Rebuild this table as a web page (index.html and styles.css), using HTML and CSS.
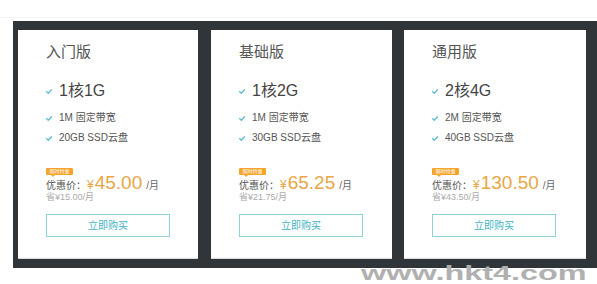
FILE: index.html
```html
<!DOCTYPE html>
<html lang="zh-CN">
<head>
<meta charset="utf-8">
<title>云服务器套餐</title>
<link rel="stylesheet" href="styles.css">
</head>
<body>
<div class="topline"></div>
<div class="frame">
  <div class="card">
    <div class="title">入门版</div>
    <div class="spec"><svg class="chk" viewBox="0 0 6 5"><path d="M0.5 2.6 L2.3 4.2 L5.5 0.8" /></svg>1核1G</div>
    <div class="feat first"><svg class="chk" viewBox="0 0 6 5"><path d="M0.5 2.6 L2.3 4.2 L5.5 0.8" /></svg>1M 固定带宽</div>
    <div class="feat"><svg class="chk" viewBox="0 0 6 5"><path d="M0.5 2.6 L2.3 4.2 L5.5 0.8" /></svg>20GB SSD云盘</div>
    <div class="badge">限时特惠</div>
    <div class="price"><span class="lbl">优惠价：</span><span class="yen">¥</span><span class="num">45.00</span><span class="unit">/月</span></div>
    <div class="save">省¥15.00/月</div>
    <div class="btn">立即购买</div>
  </div>
  <div class="card">
    <div class="title">基础版</div>
    <div class="spec"><svg class="chk" viewBox="0 0 6 5"><path d="M0.5 2.6 L2.3 4.2 L5.5 0.8" /></svg>1核2G</div>
    <div class="feat first"><svg class="chk" viewBox="0 0 6 5"><path d="M0.5 2.6 L2.3 4.2 L5.5 0.8" /></svg>1M 固定带宽</div>
    <div class="feat"><svg class="chk" viewBox="0 0 6 5"><path d="M0.5 2.6 L2.3 4.2 L5.5 0.8" /></svg>30GB SSD云盘</div>
    <div class="badge">限时特惠</div>
    <div class="price"><span class="lbl">优惠价：</span><span class="yen">¥</span><span class="num">65.25</span><span class="unit">/月</span></div>
    <div class="save">省¥21.75/月</div>
    <div class="btn">立即购买</div>
  </div>
  <div class="card">
    <div class="title">通用版</div>
    <div class="spec"><svg class="chk" viewBox="0 0 6 5"><path d="M0.5 2.6 L2.3 4.2 L5.5 0.8" /></svg>2核4G</div>
    <div class="feat first"><svg class="chk" viewBox="0 0 6 5"><path d="M0.5 2.6 L2.3 4.2 L5.5 0.8" /></svg>2M 固定带宽</div>
    <div class="feat"><svg class="chk" viewBox="0 0 6 5"><path d="M0.5 2.6 L2.3 4.2 L5.5 0.8" /></svg>40GB SSD云盘</div>
    <div class="badge">限时特惠</div>
    <div class="price"><span class="lbl">优惠价：</span><span class="yen">¥</span><span class="num">130.50</span><span class="unit">/月</span></div>
    <div class="save">省¥43.50/月</div>
    <div class="btn">立即购买</div>
  </div>
</div>
<div class="watermark">www.hkt4.com</div>
</body>
</html>
```
FILE: styles.css
```css
html, body {
  margin: 0;
  padding: 0;
}
body {
  width: 597px;
  height: 284px;
  background: #ffffff;
  overflow: hidden;
  position: relative;
  font-family: "Liberation Sans", "Noto Sans CJK SC", sans-serif;
}
.topline {
  height: 1px;
  margin-top: 17px;
  background: #f7f4f4;
}
.frame {
  margin: 3px 0 0 13px;
  width: 584px;
  box-sizing: border-box;
  background: #30353a;
  padding: 9px 12px 9px 5px;
  display: grid;
  grid-template-columns: 180px 181px 181px;
  column-gap: 13px;
}
.frame .card:nth-child(3) {
  margin-left: -1px;
}
.card {
  background: #ffffff;
  border-bottom: 1px solid #d8dadc;
  padding: 12px 28px 21px 28px;
  display: flex;
  flex-direction: column;
  align-items: flex-start;
  min-width: 0;
}
.title {
  font-size: 15px;
  line-height: 20px;
  color: #555555;
}
.spec {
  margin-top: 19px;
  font-size: 16px;
  line-height: 20px;
  color: #444444;
  display: flex;
  align-items: center;
}
.feat {
  margin-top: 4px;
  font-size: 10px;
  line-height: 16px;
  color: #555555;
  display: flex;
  align-items: center;
}
.feat.first {
  margin-top: 9px;
}
.chk {
  width: 6px;
  height: 5px;
  margin-right: 7px;
  fill: none;
  stroke: #5bbdcd;
  stroke-width: 1.3;
  stroke-linecap: round;
  stroke-linejoin: round;
  flex: none;
}
.badge {
  margin-top: 22px;
  position: relative;
  width: 27px;
  height: 7px;
  background: #f5a42a;
  color: #ffffff;
  font-size: 5px;
  line-height: 7px;
  text-align: center;
  border-radius: 1px;
}
.badge::after {
  content: "";
  position: absolute;
  left: 5px;
  bottom: -2px;
  border-left: 2px solid transparent;
  border-right: 2px solid transparent;
  border-top: 2px solid #f5a42a;
}
.price {
  display: flex;
  flex-wrap: nowrap;
  align-items: baseline;
  white-space: nowrap;
  height: 14px;
  line-height: 14px;
  margin-top: 1px;
}
.price span {
  flex: none;
}
.lbl {
  font-size: 10px;
  color: #555555;
}
.yen {
  font-size: 12px;
  color: #e9a646;
  margin-left: 1px;
  margin-right: 1px;
}
.num {
  font-size: 19px;
  color: #e9a646;
}
.unit {
  font-size: 10px;
  color: #666666;
  margin-left: 4px;
}
.save {
  margin-top: 1px;
  font-size: 9px;
  line-height: 12px;
  color: #aaaaaa;
  white-space: nowrap;
}
.btn {
  margin-top: 11px;
  width: 124px;
  height: 23px;
  box-sizing: border-box;
  border: 1px solid #8fd0da;
  color: #41b3c6;
  font-size: 10px;
  line-height: 21px;
  text-align: center;
}
.watermark {
  position: absolute;
  left: 361px;
  top: 261px;
  font-family: "Liberation Sans", sans-serif;
  font-weight: bold;
  font-size: 20px;
  line-height: 24px;
  color: #b0b0b0;
  transform: scaleX(1.62);
  transform-origin: left top;
  white-space: nowrap;
}
```
